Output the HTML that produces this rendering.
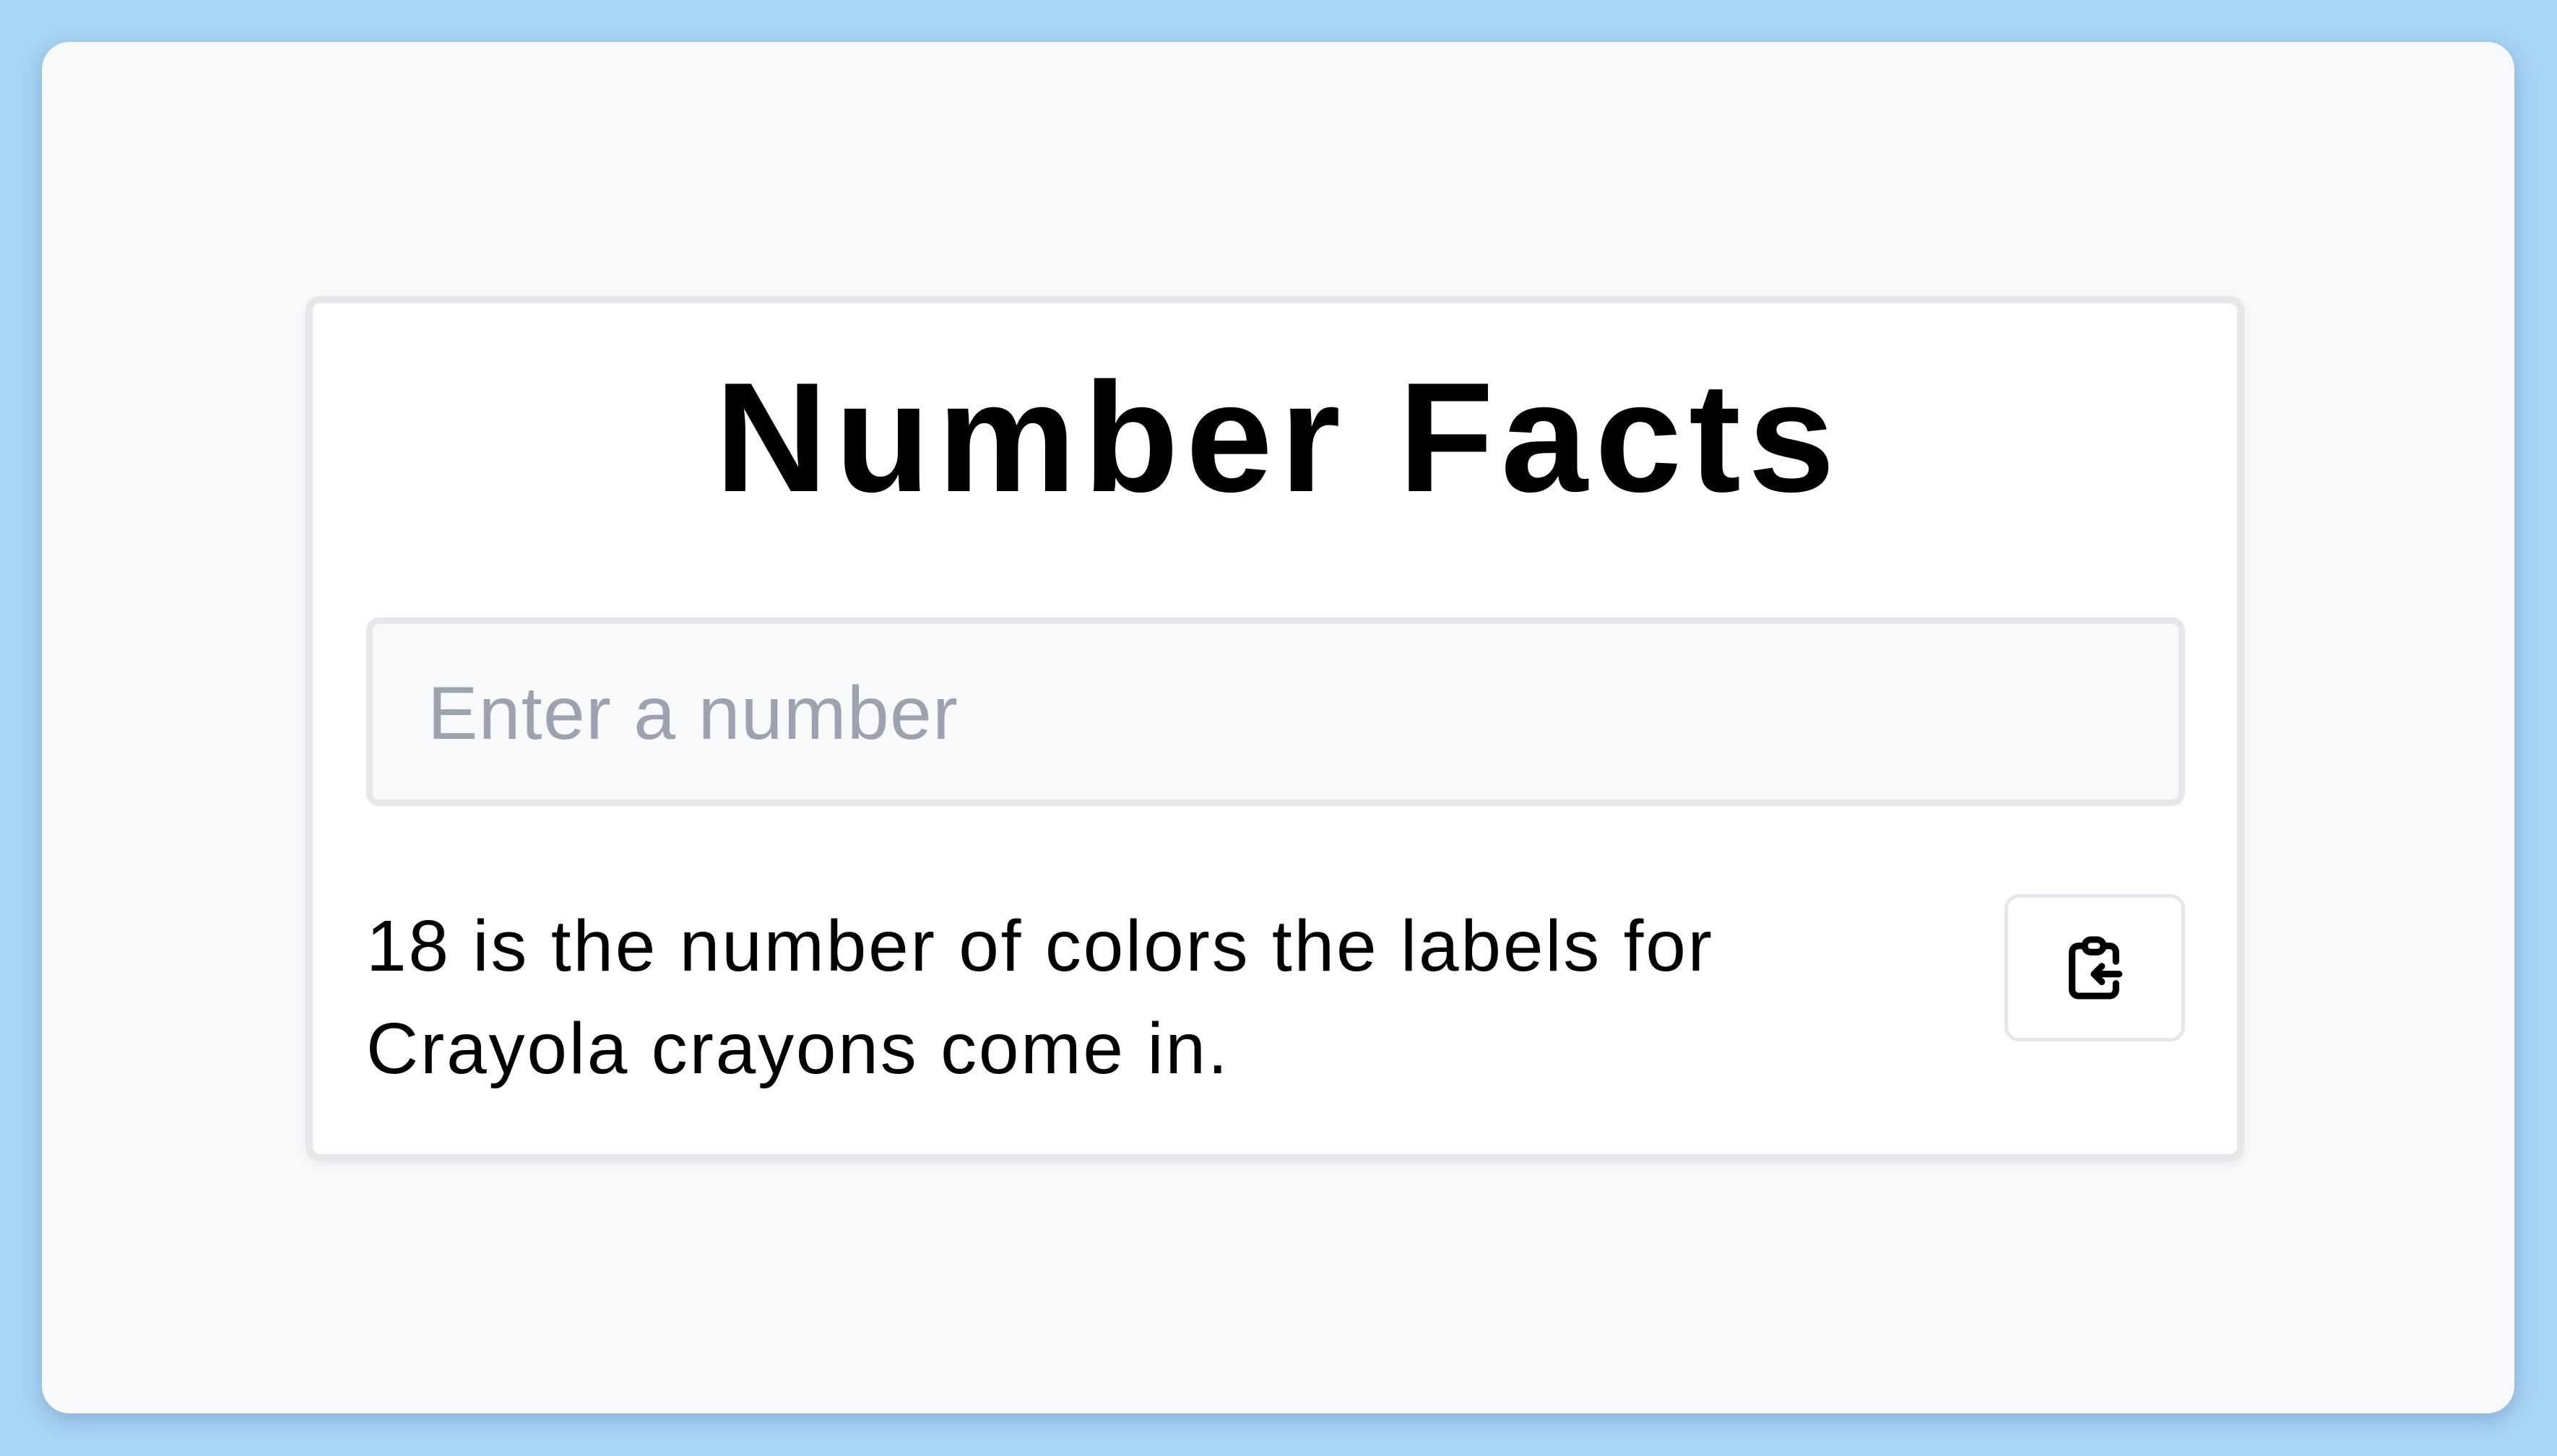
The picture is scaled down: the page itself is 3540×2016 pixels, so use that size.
<!DOCTYPE html>
<html><head><meta charset="utf-8"><style>
html,body{margin:0;padding:0;width:3540px;height:2016px;overflow:hidden;background:#a9d5f6;font-family:"Liberation Sans",sans-serif;}
.panel{position:absolute;left:58px;top:58px;width:3423px;height:1899px;background:#f8f9fb;border-radius:38px;box-shadow:0 8px 30px rgba(60,100,140,0.35);}
.card{position:absolute;left:423px;top:410px;width:2684px;height:1198px;box-sizing:border-box;background:#fff;border:10px solid #e5e7eb;border-radius:20px;box-shadow:0 4px 14px rgba(0,0,0,0.06);}
.t{position:absolute;white-space:nowrap;line-height:1;}
.title{left:0;width:3540px;text-align:center;top:497px;font-weight:bold;font-size:216px;letter-spacing:10px;color:#000;}
.input{position:absolute;left:507px;top:855px;width:2518px;height:261px;box-sizing:border-box;background:#f8f9fb;border:9px solid #e5e7eb;border-radius:18px;}
.ph{left:592px;top:936px;font-size:104px;color:#9ca3af;letter-spacing:1.3px;}
.body{left:507px;font-size:100px;color:#000;letter-spacing:2.8px;}
.btn{position:absolute;left:2775px;top:1238px;width:250px;height:204px;box-sizing:border-box;border:5px solid #e5e7eb;border-radius:20px;background:#fff;}
</style></head><body>
<div class="panel"></div>
<div class="card"></div>
<div class="t title">Number Facts</div>
<div class="input"></div>
<div class="t ph">Enter a number</div>
<div class="t body" style="top:1260px">18 is the number of colors the labels for</div>
<div class="t body" style="top:1402px">Crayola crayons come in.</div>
<div class="btn"></div>
<svg style="position:absolute;left:2847px;top:1288px" width="104" height="104" viewBox="0 0 24 24" fill="none" stroke="#000" stroke-width="2.1" stroke-linecap="round" stroke-linejoin="round">
<path d="M9 5H7a2 2 0 0 0-2 2v12a2 2 0 0 0 2 2h10a2 2 0 0 0 2-2v-2"/>
<path d="M15 5h2a2 2 0 0 1 2 2v3"/>
<rect x="9" y="3" width="6" height="4" rx="2"/>
<path d="M20 14H12"/>
<path d="M14.5 11.5L12 14l2.5 2.5"/>
</svg>
</body></html>
